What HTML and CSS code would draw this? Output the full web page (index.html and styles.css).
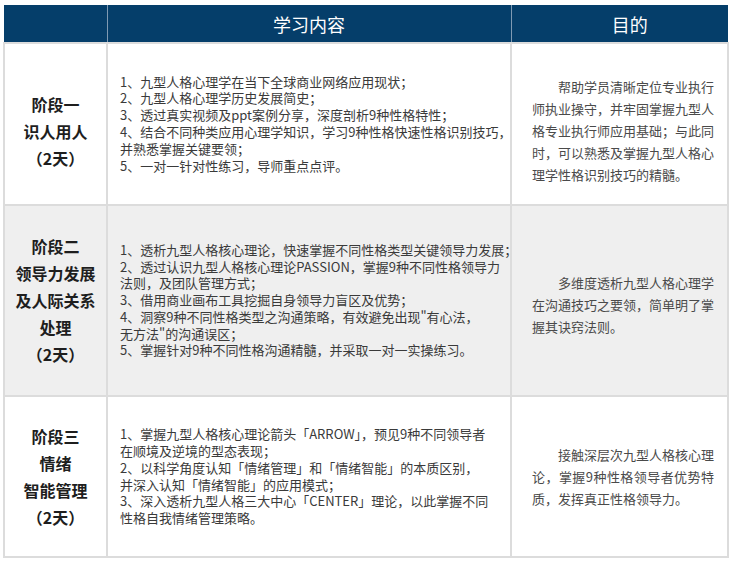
FILE: index.html
```html
<!DOCTYPE html>
<html lang="zh-CN">
<head>
<meta charset="utf-8">
<link rel="stylesheet" href="styles.css">
</head>
<body>
<table class="plan">
  <colgroup>
    <col class="c1">
    <col class="c2">
    <col class="c3">
  </colgroup>
  <thead>
    <tr class="head">
      <th></th>
      <th>学习内容</th>
      <th class="goal-h">目的</th>
    </tr>
  </thead>
  <tbody>
    <tr class="r1">
      <td class="stage"><div class="shift-down">阶段一<br>识人用人<br>（2天）</div></td>
      <td class="content"><div>1、九型人格心理学在当下全球商业网络应用现状；<br>2、九型人格心理学历史发展简史；<br>3、透过真实视频及ppt案例分享，深度剖析9种性格特性；<br>4、结合不同种类应用心理学知识，学习9种性格快速性格识别技巧，<br>并熟悉掌握关键要领；<br>5、一对一针对性练习，导师重点点评。</div></td>
      <td class="goal"><p class="shift-down">帮助学员清晰定位专业执行师执业操守，并牢固掌握九型人格专业执行师应用基础；与此同时，可以熟悉及掌握九型人格心理学性格识别技巧的精髓。</p></td>
    </tr>
    <tr class="r2">
      <td class="stage"><div>阶段二<br>领导力发展<br>及人际关系<br>处理<br>（2天）</div></td>
      <td class="content"><div>1、透析九型人格核心理论，快速掌握不同性格类型关键领导力发展；<br>2、透过认识九型人格核心理论PASSION，掌握9种不同性格领导力<br>法则，及团队管理方式；<br>3、借用商业画布工具挖掘自身领导力盲区及优势；<br>4、洞察9种不同性格类型之沟通策略，有效避免出现"有心法，<br>无方法"的沟通误区；<br>5、掌握针对9种不同性格沟通精髓，并采取一对一实操练习。</div></td>
      <td class="goal"><p class="shift-down-sm">多维度透析九型人格心理学在沟通技巧之要领，简单明了掌握其诀窍法则。</p></td>
    </tr>
    <tr class="r3">
      <td class="stage"><div>阶段三<br>情绪<br>智能管理<br>（2天）</div></td>
      <td class="content"><div>1、掌握九型人格核心理论箭头「ARROW」，预见9种不同领导者<br>在顺境及逆境的型态表现；<br>2、以科学角度认知「情绪管理」和「情绪智能」的本质区别，<br>并深入认知「情绪智能」的应用模式；<br>3、深入透析九型人格三大中心「CENTER」理论，以此掌握不同<br>性格自我情绪管理策略。</div></td>
      <td class="goal"><p>接触深层次九型人格核心理论，掌握9种性格领导者优势特质，发挥真正性格领导力。</p></td>
    </tr>
  </tbody>
</table>
</body>
</html>
```

FILE: styles.css
```css
html, body {
  margin: 0;
  padding: 0;
  background: #ffffff;
}

body {
  padding: 5px 0 0 3px;
  font-family: "Noto Sans CJK SC", "Noto Sans", sans-serif;
}

.plan {
  border-collapse: collapse;
  table-layout: fixed;
  width: 724px;
}

.c1 { width: 103px; }
.c2 { width: 404px; }
.c3 { width: 217px; }

.head { height: 38px; }

.head th {
  padding: 0;
  background: #053e6a;
  color: #ffffff;
  font-size: 18px;
  font-weight: 400;
  line-height: 24px;
  border-left: 1px solid #7f9ab3;
  border-right: 1px solid #7f9ab3;
}

.head th:first-child { border-left: 0; }
.head th:last-child { border-right: 0; }

.head .goal-h { padding-left: 20px; }

.r1 { height: 162px; }
.r2 { height: 191px; }
.r3 { height: 161px; }

.r2 td { background: #efefef; }

tbody td {
  border: 2px solid #dcdcdc;
  padding: 0;
  vertical-align: middle;
}

.stage {
  text-align: center;
  font-size: 16px;
  font-weight: 700;
  line-height: 27px;
  color: #1e1e1e;
}

.content {
  padding-left: 12px !important;
  font-size: 13px;
  line-height: 16.8px;
  color: #3a3a3a;
  white-space: nowrap;
}

.goal {
  padding: 0 13px 0 20px !important;
  color: #4a4a4a;
}

.goal p {
  margin: 0;
  font-size: 13px;
  line-height: 22px;
  text-align: justify;
  text-indent: 2em;
}

.shift-down { padding-top: 14px; }
.shift-down-sm { padding-top: 8px; }
```
